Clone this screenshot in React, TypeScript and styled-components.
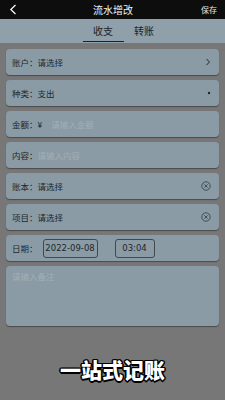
import styled, { createGlobalStyle } from 'styled-components';

const GlobalStyle = createGlobalStyle`
  html, body {
    margin: 0;
    padding: 0;
    background: #777777;
    font-family: "Noto Sans CJK SC", "Noto Sans", sans-serif;
  }
`;

type Row = {
  label: string;
  value?: string;
  placeholder?: string;
  indent?: number;
  icon?: 'chevron' | 'dot' | 'clear';
};

const rows: Row[] = [
  { label: '账户：', value: '请选择', icon: 'chevron' },
  { label: '种类：', value: '支出', icon: 'dot' },
  { label: '金额：¥', placeholder: '请输入金额', indent: 9 },
  { label: '内容：', placeholder: '请输入内容', indent: 0 },
  { label: '账本：', value: '请选择', icon: 'clear' },
  { label: '项目：', value: '请选择', icon: 'clear' },
];

function RowIcon({ kind }: { kind?: Row['icon'] }) {
  if (kind === 'chevron') {
    return (
      <svg width="6" height="8" viewBox="0 0 6 8">
        <path d="M1.5 1 L4.5 4 L1.5 7" fill="none" stroke="#1e272c" strokeWidth="1" />
      </svg>
    );
  }
  if (kind === 'dot') {
    return (
      <svg width="4" height="4" viewBox="0 0 4 4">
        <circle cx="2" cy="2" r="1.2" fill="#1e272c" />
      </svg>
    );
  }
  if (kind === 'clear') {
    return (
      <svg width="10" height="10" viewBox="0 0 10 10">
        <circle cx="5" cy="5" r="4.2" fill="none" stroke="#3a464c" strokeWidth="0.9" />
        <path d="M3.4 3.4 L6.6 6.6 M6.6 3.4 L3.4 6.6" stroke="#3a464c" strokeWidth="0.9" />
      </svg>
    );
  }
  return null;
}

export default function App() {
  return (
    <Page>
      <GlobalStyle />
      <Header>
        <Back>
          <svg width="8" height="11" viewBox="0 0 8 11">
            <path d="M6.5 1 L1.8 5.5 L6.5 10" fill="none" stroke="#ffffff" strokeWidth="1.2" />
          </svg>
        </Back>
        <Title>流水增改</Title>
        <Save>保存</Save>
      </Header>
      <Tabs>
        <Tab active>收支</Tab>
        <Tab>转账</Tab>
      </Tabs>
      <Form>
        {rows.map((r) => (
          <Card key={r.label}>
            <Label>{r.label}</Label>
            {r.value ? (
              <Value>{r.value}</Value>
            ) : (
              <Placeholder indent={r.indent ?? 0}>{r.placeholder}</Placeholder>
            )}
            <IconSlot>
              <RowIcon kind={r.icon} />
            </IconSlot>
          </Card>
        ))}
        <Card>
          <Label>日期：</Label>
          <DateBox>2022-09-08</DateBox>
          <TimeBox>03:04</TimeBox>
        </Card>
        <NoteCard>
          <Placeholder indent={0}>请输入备注</Placeholder>
        </NoteCard>
      </Form>
      <Slogan>一站式记账</Slogan>
    </Page>
  );
}

const Page = styled.div`
  width: 225px;
  height: 400px;
  background: #777777;
  display: flex;
  flex-direction: column;
  overflow: hidden;
`;

const Header = styled.div`
  height: 19px;
  background: #0d0d0d;
  display: flex;
  align-items: center;
  padding: 0 8px 0 9px;
`;

const Back = styled.div`
  width: 10px;
  display: flex;
  align-items: center;
`;

const Title = styled.div`
  flex: 1;
  text-align: center;
  color: #f2f2f2;
  font-size: 10px;
  padding-left: 6px;
`;

const Save = styled.div`
  color: #e6e6e6;
  font-size: 8px;
`;

const Tabs = styled.div`
  height: 24px;
  background: #8fa0aa;
  display: flex;
  justify-content: center;
  padding-left: 22px;
  box-sizing: border-box;
`;

const Tab = styled.div<{ active?: boolean }>`
  width: 41px;
  display: flex;
  align-items: center;
  justify-content: center;
  font-size: 10px;
  color: #1b2227;
  box-sizing: border-box;
  border-bottom: 1px solid ${(p) => (p.active ? '#1b2227' : 'transparent')};
  margin-bottom: 1px;
`;

const Form = styled.div`
  display: flex;
  flex-direction: column;
  gap: 5px;
  padding: 6px 6px 0 6px;
`;

const Card = styled.div`
  height: 26px;
  background: #8a9ba5;
  border-radius: 4px;
  box-shadow: 0 1px 1px rgba(40, 40, 40, 0.55);
  display: flex;
  align-items: center;
  padding: 0 8px 0 6px;
  font-size: 8.5px;
  color: #1e272c;
`;

const NoteCard = styled(Card)`
  height: 60px;
  align-items: flex-start;
  padding-top: 4px;
  box-sizing: border-box;
`;

const Label = styled.span`
  color: #1e272c;
  white-space: pre;
`;

const Value = styled.span`
  flex: 1;
  color: #1e272c;
`;

const Placeholder = styled.span<{ indent: number }>`
  flex: 1;
  color: #a3afb6;
  padding-left: ${(p) => p.indent}px;
`;

const IconSlot = styled.span`
  display: flex;
  align-items: center;
`;

const Box = styled.div`
  height: 19px;
  border: 1px solid #3e4a50;
  border-radius: 3px;
  box-sizing: border-box;
  display: flex;
  align-items: center;
  justify-content: center;
  font-family: "DejaVu Sans", sans-serif;
  font-size: 8.5px;
  color: #1e272c;
`;

const DateBox = styled(Box)`
  width: 55px;
  margin-left: 5px;
`;

const TimeBox = styled(Box)`
  width: 40px;
  margin-left: 17px;
`;

const Slogan = styled.div`
  margin-top: 28px;
  text-align: center;
  font-size: 21px;
  font-weight: 900;
  color: #ffffff;
  text-shadow: -1px -1px 0 #000, 1px -1px 0 #000, -1px 1px 0 #000, 1px 1px 0 #000,
    0 1.5px 0 #000, 0 -1.5px 0 #000, 1.5px 0 0 #000, -1.5px 0 0 #000;
`;
